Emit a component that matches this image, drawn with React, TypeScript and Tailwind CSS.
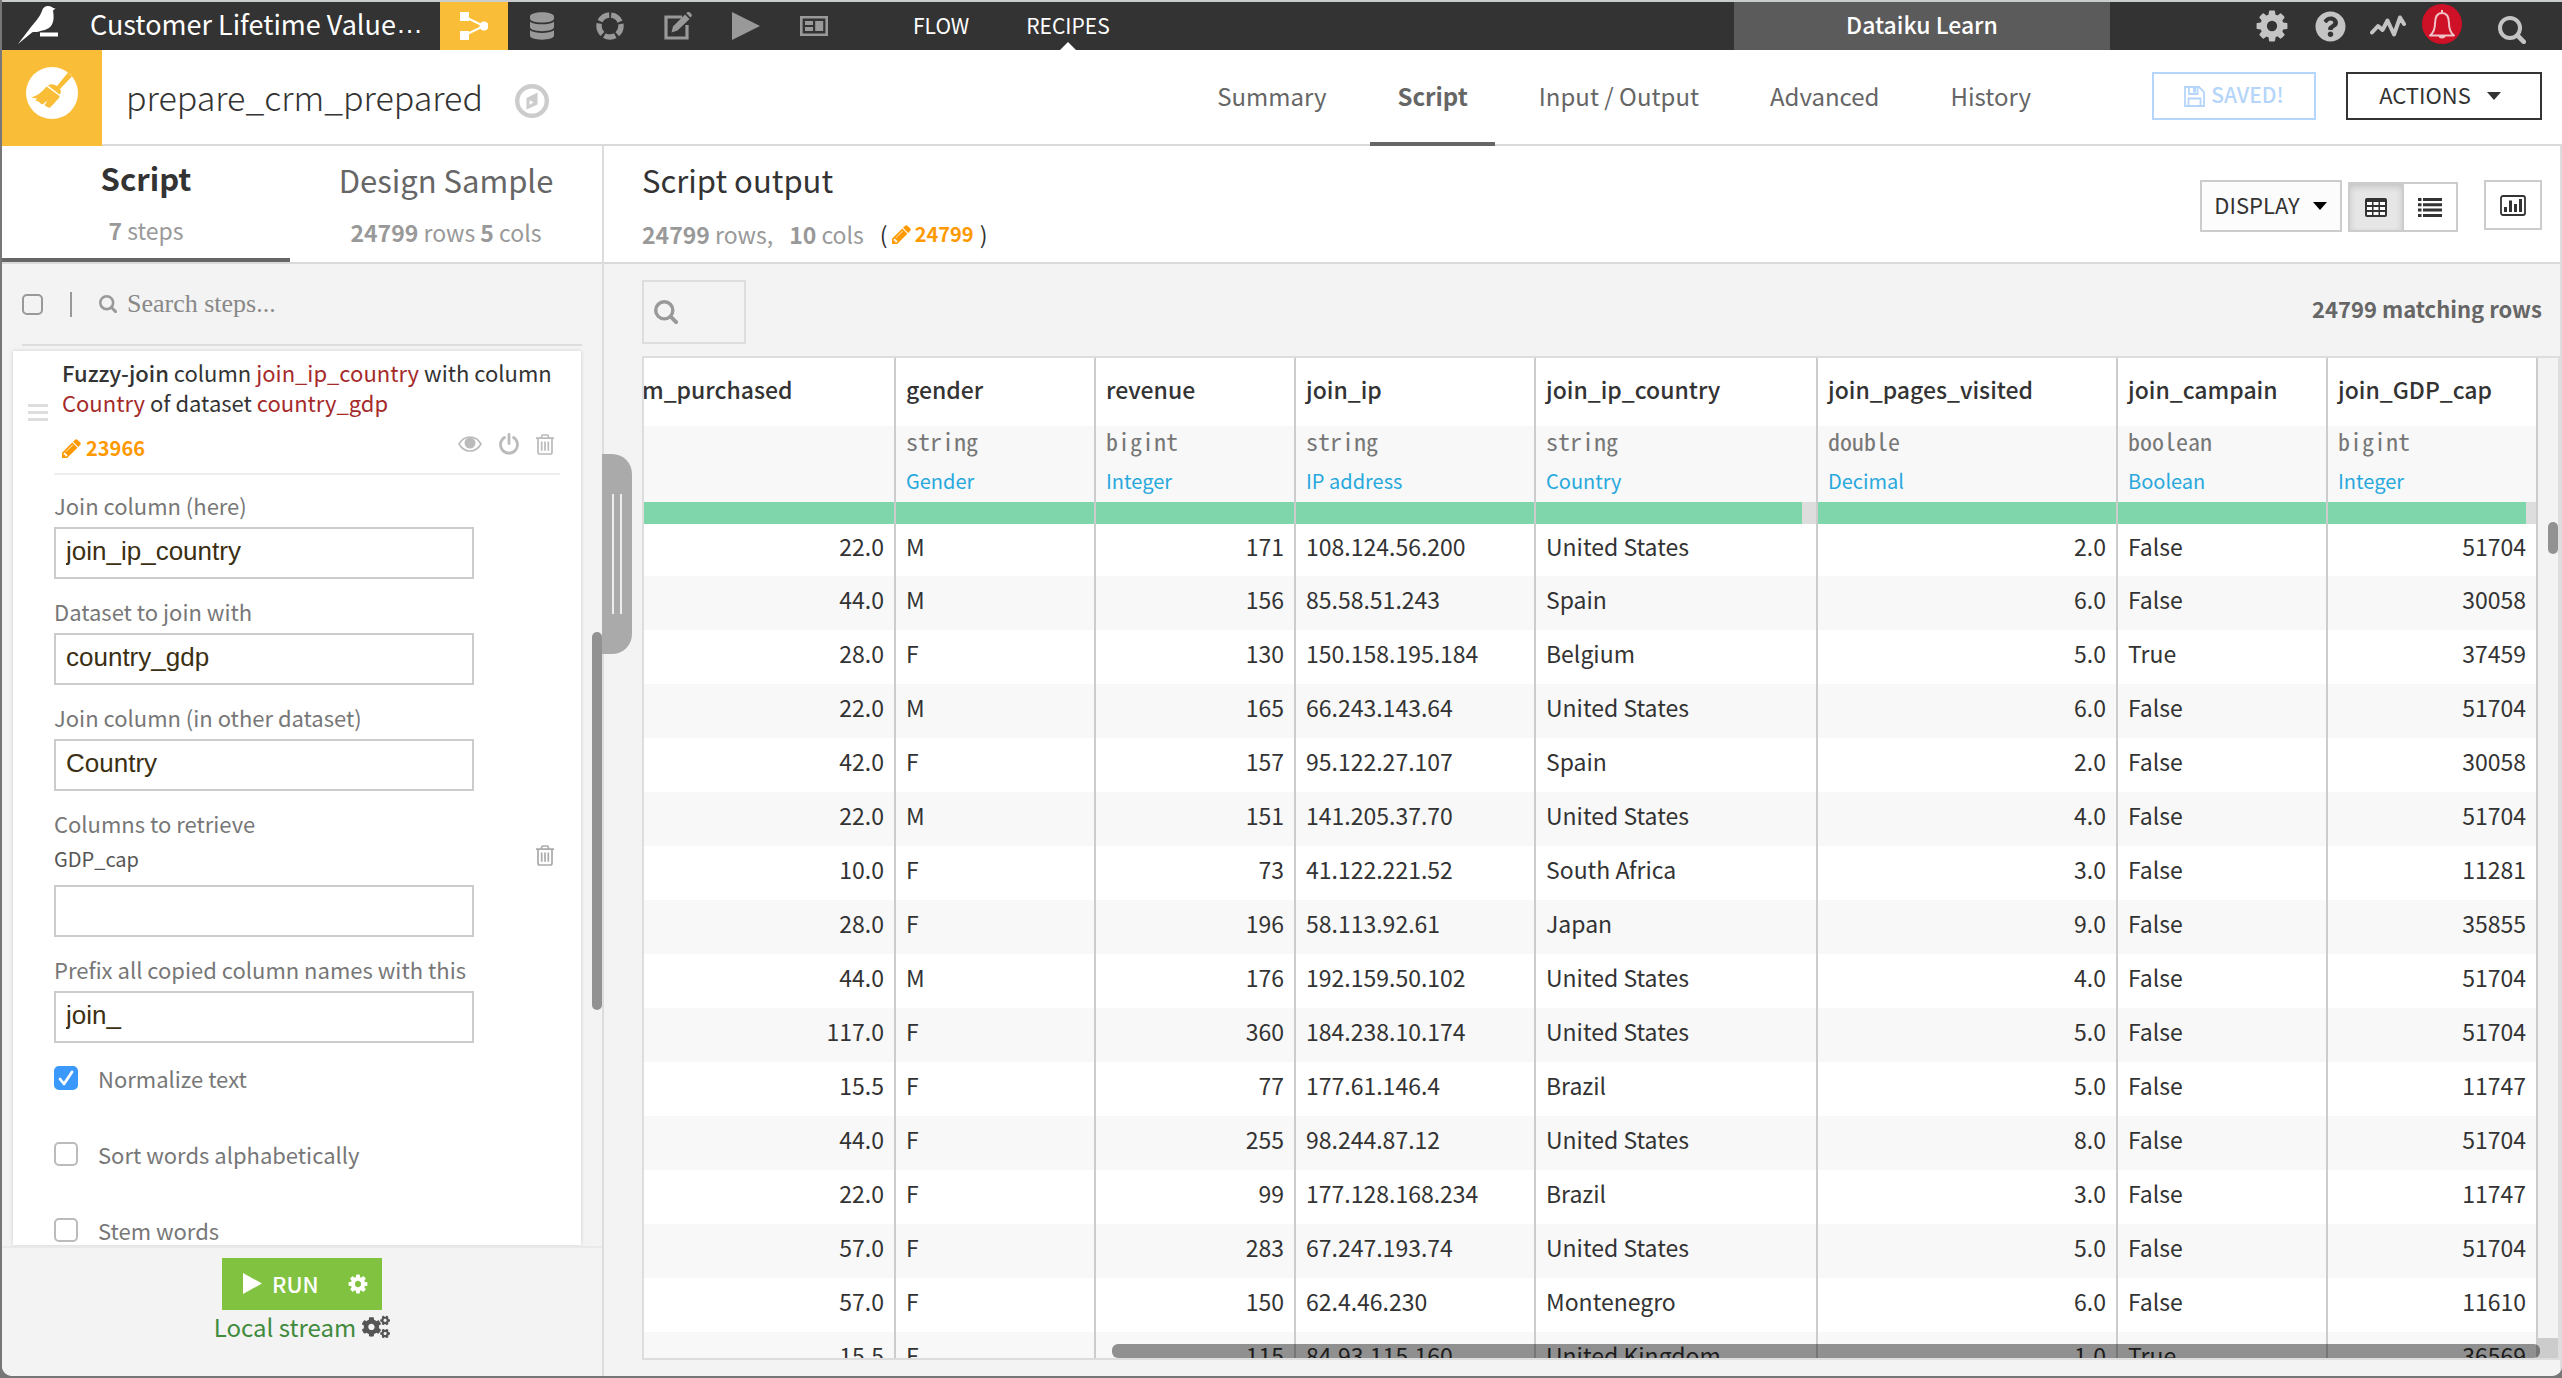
import { ReactNode, useState } from "react";
import { FaCogs, FaDatabase, FaQuestionCircle } from "react-icons/fa";

type IconProps = {
  className?: string;
};

function CogIcon({ className }: IconProps) {
  return (
    <svg viewBox="0 0 1792 1792" fill="currentColor" className={className} aria-hidden="true">
      <path d="M1152 896q0-106-75-181t-181-75-181 75-75 181 75 181 181 75 181-75 75-181zm512-109v222q0 12-8 23t-20 13l-185 28q-19 54-39 91 35 50 107 138 10 12 10 25t-9 23q-27 37-99 108t-94 71q-12 0-26-9l-138-108q-44 23-91 38-16 136-29 186-7 28-36 28h-222q-14 0-24.5-8.5t-11.5-21.5l-28-184q-49-16-90-37l-141 107q-10 9-25 9-14 0-25-11-126-114-165-168-7-10-7-23 0-12 8-23 15-21 51-66.5t54-70.5q-27-50-41-99l-183-27q-13-2-21-12.5t-8-23.5v-222q0-12 8-23t19-13l186-28q14-46 39-92-40-57-107-138-10-12-10-24 0-10 9-23 26-36 98.5-107.5t94.5-71.5q13 0 26 10l138 107q44-23 91-38 16-136 29-186 7-28 36-28h222q14 0 24.5 8.5t11.5 21.5l28 184q49 16 90 37l142-107q9-9 24-9 13 0 25 10 129 119 165 170 7 8 7 22 0 12-8 23-15 21-51 66.5t-54 70.5q26 50 41 98l183 28q13 2 21 12.5t8 23.5z" />
    </svg>
  );
}

function PencilIcon({ className }: IconProps) {
  return (
    <svg viewBox="128 128 1536 1536" fill="currentColor" className={className} aria-hidden="true">
      <path d="M491 1536l91-91-235-235-91 91v107h128v128h107zm523-928q0-22-22-22-10 0-17 7l-542 542q-7 7-7 17 0 22 22 22 10 0 17-7l542-542q7-7 7-17zm-54-192l416 416-832 832h-416v-416zm683 96q0 53-37 90l-166 166-416-416 166-165q36-38 90-38 53 0 91 38l235 234q37 39 37 91z" />
    </svg>
  );
}

function SearchIcon({ className }: IconProps) {
  return (
    <svg viewBox="0 0 28 28" fill="none" stroke="currentColor" className={className} aria-hidden="true">
      <circle cx="12" cy="12" r="10" strokeWidth="4" />
      <path d="M19.5 19.5l6.3 6.3" strokeWidth="4.6" strokeLinecap="round" />
    </svg>
  );
}

function TrashIcon({ className }: IconProps) {
  return (
    <svg viewBox="0 0 18 21" fill="none" stroke="currentColor" strokeWidth="1.7" className={className} aria-hidden="true">
      <path d="M0 4.2h18M5.6 4V2.4Q5.6 1 7 1h4q1.4 0 1.4 1.4V4M2 4.5v13.7Q2 20 3.8 20h10.4q1.8 0 1.8-1.8V4.5M5.7 7.6v9.2M9 7.6v9.2M12.3 7.6v9.2" />
    </svg>
  );
}

function BirdLogo() {
  return (
    <svg viewBox="0 0 44 42" fill="#fff" className="h-[42px] w-11" aria-hidden="true">
      <path d="M2 39L15 22C21 15 24 11 26 6C27 2 30 1 32 1C35 1 36 2 37 3L39.500 3.500L37 5.500C38 12 38 17 35 21C32 25 27 25 23 26.500C20 27.500 17 26.500 16 27.500z" />
      <path d="M24 27.500h18v4H24z" />
    </svg>
  );
}

function FlowIcon() {
  return (
    <svg viewBox="0 0 28 28" className="size-7" aria-hidden="true">
      <path d="M5 5l19 9-19 9" fill="none" stroke="#fff" strokeWidth="2" />
      <path d="M0 0h9v9H0zM0 19h9v9H0z" fill="#fff" />
      <circle cx="24" cy="14" r="4.500" fill="#fff" />
    </svg>
  );
}

function RingIcon() {
  return (
    <svg viewBox="0 0 28 28" className="size-7" aria-hidden="true">
      <circle
        cx="14"
        cy="14"
        r="11"
        fill="none"
        stroke="currentColor"
        strokeWidth="5.400"
        strokeDasharray="11.400 2.423"
        strokeDashoffset="-1.200"
        transform="rotate(-90 14 14)"
      />
    </svg>
  );
}

function NotebookIcon() {
  return (
    <svg viewBox="0 0 28 28" className="size-7" aria-hidden="true">
      <path d="M18 5H2v21h21V13" fill="none" stroke="currentColor" strokeWidth="3.200" />
      <path d="M7.500 20.500l1.500-6L21 2.500l4.500 4.500L13.500 18.500z" fill="currentColor" />
      <path d="M22.300 1.200l1-1q1.200-.8 2.500.2l1.600 1.600q1 1.300 0 2.600l-1 1z" fill="currentColor" />
    </svg>
  );
}

function DashboardIcon() {
  return (
    <svg viewBox="0 0 28 20" fill="currentColor" className="h-5 w-7" aria-hidden="true">
      <path fillRule="evenodd" d="M0 0h28v20H0zM2.600 2.600v14.800h22.800V2.600z" />
      <path d="M5 5h8v4H5zM5 11h8v4H5zM15.200 5h8v10h-8z" />
    </svg>
  );
}

function PlayIcon({ className }: IconProps) {
  return (
    <svg viewBox="0 0 28 28" fill="currentColor" preserveAspectRatio="none" className={className} aria-hidden="true">
      <path d="M0 0l28 14L0 28z" />
    </svg>
  );
}

function BroomIcon() {
  return (
    <svg viewBox="0 0 52 52" className="size-[52px]" aria-hidden="true">
      <circle cx="26" cy="26" r="26" fill="#fff" />
      <path d="M42 5.500L46 9.500L34 22Q36 26 33.500 27.500L22 18.500Q26 16 31 19z" fill="#f9bd38" />
      <path d="M20.500 19.500L33.500 29Q34 31 31 33Q28 37 23.500 41L18.500 38.500L21.500 33.500L16.500 37.500Q14 36.500 12.500 34.500L9 33.500L11.500 31.800Q8 31 5 30.500Q14 28 20.500 19.500z" fill="#f9bd38" />
    </svg>
  );
}

function CompassIcon() {
  return (
    <svg viewBox="0 0 34 34" className="size-[34px]" aria-hidden="true">
      <circle cx="17" cy="17" r="14.800" fill="none" stroke="#ccc" strokeWidth="4.400" />
      <path d="M22.500 8.500v12L11.500 25.500V14z" fill="#ccc" />
      <path d="M14.500 16.200l4 2-4 2.800z" fill="#fff" />
    </svg>
  );
}

function Caret({ className }: IconProps) {
  return (
    <svg viewBox="0 0 14 8" fill="currentColor" className={className} aria-hidden="true">
      <path d="M0 0h14L7 8z" />
    </svg>
  );
}

const apps: { label: string; icon: ReactNode; active?: boolean }[] = [
  { label: "Flow", icon: <FlowIcon />, active: true },
  { label: "Datasets", icon: <FaDatabase className="h-7 w-6" /> },
  { label: "Recipes", icon: <RingIcon /> },
  { label: "Notebooks", icon: <NotebookIcon /> },
  { label: "Jobs", icon: <PlayIcon className="size-7" /> },
  { label: "Dashboards", icon: <DashboardIcon /> },
];

function TopBar() {
  return (
    <header className="border-t-2 border-[#c9cdcd] bg-[#333]">
      <div className="flex h-12 items-stretch text-white">
        <a href="#home" aria-label="Home" className="flex w-[72px] items-center justify-center">
          <BirdLogo />
        </a>
        <a
          href="#project"
          className="flex w-[366px] items-center pb-1 pl-4 text-[27px] leading-[44px] whitespace-nowrap"
        >
          Customer Lifetime Value
          <span className="font-['Liberation_Sans',sans-serif]">…</span>
        </a>
        {apps.map((app) => (
          <button
            key={app.label}
            aria-label={app.label}
            className={
              app.active
                ? "flex w-[68px] items-center justify-center bg-[#f9bd38] text-white"
                : "flex w-[68px] items-center justify-center text-[#999]"
            }
          >
            {app.icon}
          </button>
        ))}
        <nav className="ml-[65px] flex items-stretch gap-[57px] text-[21px] leading-[46px]">
          <a href="#flow">FLOW</a>
          <a href="#recipes" className="relative">
            RECIPES
            <svg viewBox="0 0 16 8" className="absolute bottom-0 left-1/2 h-2 w-4 -translate-x-1/2" aria-hidden="true">
              <path d="M8 0l8 8H0z" fill="#fff" />
            </svg>
          </a>
        </nav>
        <a
          href="#instance"
          className="ml-auto w-[376px] bg-[#5b5b5b] text-center text-[23px] leading-[44px] font-medium"
        >
          Dataiku Learn
        </a>
        <div className="ml-[133px] flex pr-[5px] text-[#c4c4c4]">
          <button aria-label="Settings" className="flex w-[58px] items-center justify-center">
            <CogIcon className="size-9" />
          </button>
          <button aria-label="Help" className="flex w-[58px] items-center justify-center">
            <FaQuestionCircle className="size-[31px]" />
          </button>
          <button aria-label="Activity" className="flex w-[58px] items-center justify-center">
            <svg viewBox="0 0 36 24" className="h-6 w-9" fill="none" stroke="currentColor" aria-hidden="true">
              <path d="M2 18.500L8 12L12.500 16L17.500 6.500L24 20.500L30 3.500L34 10" strokeWidth="4" strokeLinejoin="round" strokeLinecap="round" />
            </svg>
          </button>
          <button aria-label="Notifications" className="flex w-[50px] items-start justify-center pt-[2px]">
            <svg viewBox="0 0 40 40" className="size-10" aria-hidden="true">
              <circle cx="20" cy="20" r="20" fill="#ce1126" />
              <path
                d="M20 6v3M8 31.500q5-4 5-12Q13 9 20 9t7 10.500q0 8 5 12z"
                fill="none"
                stroke="#f0c3c8"
                strokeWidth="2"
                strokeLinejoin="round"
              />
              <path d="M16.500 32q.5 2.500 3.500 2.500t3.500-2.500z" fill="#f0c3c8" />
            </svg>
          </button>
          <button aria-label="Search" className="flex w-[90px] items-center justify-center pt-2">
            <SearchIcon className="size-7" />
          </button>
        </div>
      </div>
    </header>
  );
}

const recipeTabs = ["Summary", "Script", "Input / Output", "Advanced", "History"];

function RecipeHeader() {
  return (
    <div className="flex h-24 items-stretch border-b-2 border-[#dadada] bg-white pr-5">
      <div className="-mb-[2px] flex w-[100px] items-start justify-center bg-[#f9bd38] pt-[17px]">
        <BroomIcon />
      </div>
      <h1 className="ml-6 text-[34px] leading-[94px] font-light text-[#333]">prepare_crm_prepared</h1>
      <button aria-label="Navigate" className="ml-8 flex items-center pt-2">
        <CompassIcon />
      </button>
      <nav className="ml-auto flex gap-[17px]">
        {recipeTabs.map((tab) => (
          <a
            key={tab}
            href={`#${tab}`}
            className={
              tab === "Script"
                ? "-mb-[2px] border-b-4 border-[#666] px-[27px] text-[24px] leading-[92px] font-bold text-[#666]"
                : "px-[27px] text-[24px] leading-[92px] text-[#666]"
            }
          >
            {tab}
          </a>
        ))}
      </nav>
      <button className="mt-[22px] ml-[94px] flex h-12 w-[164px] items-center justify-center gap-[6px] border-2 border-[#b5d5fa] text-[21px] leading-[40px] font-medium text-[#b5d5fa]">
        <svg viewBox="0 0 21 21" className="size-[21px]" fill="none" stroke="currentColor" strokeWidth="1.800" aria-hidden="true">
          <path d="M1 1h14l5 5v14H1zM5 1v7h8.500V1M4.500 20v-7.500h12V20" />
          <path d="M10.500 2v4.500" strokeWidth="3" />
        </svg>
        <span className="pb-1">SAVED!</span>
      </button>
      <button className="mt-[22px] ml-[30px] flex h-12 w-[196px] items-center justify-center gap-4 border-2 border-[#333] pr-2 text-[22px] leading-[40px] text-[#333]">
        <span className="pb-1">ACTIONS</span>
        <Caret className="h-2 w-[14px]" />
      </button>
    </div>
  );
}

function TextBox({ id, value, className }: { id: string; value: string; className: string }) {
  const [text, setText] = useState(value);
  return (
    <input
      id={id}
      type="text"
      value={text}
      onChange={(e) => setText(e.target.value)}
      className={`${className} block h-[52px] w-[420px] border-2 border-[#ccc] bg-white px-[10px] pb-1 font-['Liberation_Sans',sans-serif] text-[26px] text-[#3b2f13]`}
    />
  );
}

function Field({ id, label, value }: { id: string; label: string; value: string }) {
  return (
    <div className="mb-[17px]">
      <label htmlFor={id} className="block text-[#777]">
        {label}
      </label>
      <TextBox id={id} value={value} className="mt-[7px]" />
    </div>
  );
}

function CheckRow({ label, checked = false }: { label: string; checked?: boolean }) {
  const [on, setOn] = useState(checked);
  return (
    <label className="mb-[46px] flex items-center gap-5 text-[#777]">
      <span className="relative flex size-6">
        <input
          type="checkbox"
          checked={on}
          onChange={() => setOn(!on)}
          className="size-6 appearance-none rounded-[5px] border-2 border-[#bbb] bg-white checked:border-[#3b99fc] checked:bg-[#3b99fc]"
        />
        {on ? (
          <svg viewBox="0 0 24 24" className="pointer-events-none absolute inset-0" fill="none" aria-hidden="true">
            <path d="M6 13l4 5 8-12" stroke="#fff" strokeWidth="2.800" strokeLinecap="round" strokeLinejoin="round" />
          </svg>
        ) : null}
      </span>
      {label}
    </label>
  );
}

function StepCard() {
  return (
    <section className="mr-[21px] ml-[11px] bg-white pt-[6px] pl-[41px] text-[22px] leading-[30px] shadow-[0_0_4px_rgba(0,0,0,0.15)]">
      <div className="relative mr-[21px] border-b-2 border-[#eee] pb-[10px] pl-2">
        <span className="absolute top-[47px] -left-[26px] flex flex-col gap-1">
          <span className="h-[3px] w-5 bg-[#ddd]" />
          <span className="h-[3px] w-5 bg-[#ddd]" />
          <span className="h-[3px] w-5 bg-[#ddd]" />
        </span>
        <p className="text-[#333]">
          <span className="font-medium">Fuzzy-join</span> column{" "}
          <span className="text-[#a52a2a]">join_ip_country</span> with column{" "}
          <span className="text-[#a52a2a]">Country</span> of dataset{" "}
          <span className="text-[#a52a2a]">country_gdp</span>
        </p>
        <div className="mt-4 flex h-[30px] items-center">
          <PencilIcon className="size-[19px] text-[#ff9900]" />
          <span className="ml-[5px] text-[20px] font-bold text-[#ff9900]">23966</span>
          <div className="ml-auto flex items-center gap-4 pr-[6px] pb-2 text-[#bbb]">
            <button aria-label="Preview">
              <svg viewBox="0 0 24 16" className="h-4 w-6" aria-hidden="true">
                <path d="M1 8Q5 1 12 1t11 7Q19 15 12 15T1 8z" fill="none" stroke="currentColor" strokeWidth="1.600" />
                <circle cx="12" cy="7" r="5.500" fill="currentColor" />
              </svg>
            </button>
            <button aria-label="Disable">
              <svg viewBox="0 0 22 22" className="size-[22px]" fill="none" stroke="currentColor" strokeWidth="2.800" strokeLinecap="round" aria-hidden="true">
                <path d="M11 1.500v9M6.500 4.500a8.500 8.500 0 1 0 9 0" />
              </svg>
            </button>
            <button aria-label="Delete">
              <TrashIcon className="h-[21px] w-[18px]" />
            </button>
          </div>
        </div>
      </div>
      <div className="pt-[15px]">
        <Field id="join-here" label="Join column (here)" value="join_ip_country" />
        <Field id="join-dataset" label="Dataset to join with" value="country_gdp" />
        <Field id="join-other" label="Join column (in other dataset)" value="Country" />
        <label htmlFor="retrieve" className="block text-[#777]">
          Columns to retrieve
        </label>
        <div className="mt-[6px] flex items-center text-[20px] text-[#555]">
          GDP_cap
          <button aria-label="Remove GDP_cap" className="mr-[27px] mb-2 ml-auto text-[#aaa]">
            <TrashIcon className="h-[21px] w-[18px]" />
          </button>
        </div>
        <TextBox id="retrieve" value="" className="mt-[11px] mb-[17px]" />
        <Field id="prefix" label="Prefix all copied column names with this" value="join_" />
        <div className="pt-[3px]">
          <CheckRow label="Normalize text" checked />
          <CheckRow label="Sort words alphabetically" />
          <CheckRow label="Stem words" />
        </div>
      </div>
    </section>
  );
}

function ScriptPanel() {
  return (
    <aside className="relative flex w-[602px] shrink-0 flex-col border-r-2 border-[#ddd] bg-[#f3f3f3]">
      <div className="flex h-[118px] shrink-0 border-b-2 border-[#dadada] bg-white text-center">
        <button className="flex w-[288px] flex-col items-center border-b-4 border-[#666] pt-3 text-[#333]">
          <span className="text-[31px] leading-[40px] font-bold">Script</span>
          <span className="mt-4 text-[23px] leading-[32px] text-[#999]">
            <b>7</b> steps
          </span>
        </button>
        <button className="flex flex-1 flex-col items-center pt-[14px] text-[#666]">
          <span className="text-[31px] leading-[40px]">Design Sample</span>
          <span className="mt-4 text-[23px] leading-[32px] text-[#999]">
            <b>24799</b> rows <b>5</b> cols
          </span>
        </button>
      </div>
      <div className="mr-5 ml-5 flex h-[82px] shrink-0 items-center border-b-2 border-[#ddd]">
        <input
          type="checkbox"
          aria-label="Select all steps"
          className="size-[21px] appearance-none rounded-[5px] border-2 border-[#999]"
        />
        <span className="mx-[27px] h-[25px] w-[2px] bg-[#999]" />
        <SearchIcon className="size-[18px] text-[#999]" />
        <input
          type="search"
          aria-label="Search steps"
          placeholder="Search steps..."
          className="ml-[10px] w-[400px] pb-[2px] font-['Liberation_Serif',serif] text-[26px] placeholder:text-[#888] placeholder:opacity-100"
        />
      </div>
      <div className="min-h-0 flex-1 overflow-hidden pt-[5px]">
        <StepCard />
      </div>
      <div className="flex h-[130px] shrink-0 flex-col items-center border-t-2 border-[#e9e9e9] pt-[10px]">
        <div className="flex h-[52px] w-40 items-stretch justify-between bg-[#81c341] text-white">
          <button className="flex items-center gap-[10px] pb-[2px] pl-[21px] text-[22px] leading-[30px] font-medium">
            <PlayIcon className="h-[21px] w-[19px]" />
            RUN
          </button>
          <button aria-label="Run options" className="mr-[13px]">
            <CogIcon className="size-[22px]" />
          </button>
        </div>
        <a href="#engine" className="flex items-center gap-[6px] text-[24px] leading-[34px] text-[#418a3d]">
          Local stream
          <FaCogs className="size-7 text-[#555]" />
        </a>
      </div>
      <span className="absolute top-[486px] right-0 h-[378px] w-[10px] rounded-[5px] bg-[#929292]" />
      <button
        aria-label="Resize panel"
        className="absolute top-[308px] -right-[30px] z-10 flex h-[200px] w-[30px] items-center justify-center gap-[6px] rounded-r-[20px] bg-[#aaa]"
      >
        <span className="h-[120px] w-[2px] bg-[#eee]" />
        <span className="h-[120px] w-[2px] bg-[#eee]" />
      </button>
    </aside>
  );
}

type Column = {
  name: string;
  storage: string;
  meaning: string;
  width: string;
  valid: number;
  numeric?: boolean;
};

const columns: Column[] = [
  { name: "m_purchased", storage: "", meaning: "", width: "w-[252px]", valid: 100, numeric: true },
  { name: "gender", storage: "string", meaning: "Gender", width: "w-[200px]", valid: 100 },
  { name: "revenue", storage: "bigint", meaning: "Integer", width: "w-[200px]", valid: 100, numeric: true },
  { name: "join_ip", storage: "string", meaning: "IP address", width: "w-[240px]", valid: 100 },
  { name: "join_ip_country", storage: "string", meaning: "Country", width: "w-[282px]", valid: 95 },
  { name: "join_pages_visited", storage: "double", meaning: "Decimal", width: "w-[300px]", valid: 100, numeric: true },
  { name: "join_campain", storage: "boolean", meaning: "Boolean", width: "w-[210px]", valid: 100 },
  { name: "join_GDP_cap", storage: "bigint", meaning: "Integer", width: "w-auto", valid: 95, numeric: true },
];

const rows = [
  ["22.0", "M", "171", "108.124.56.200", "United States", "2.0", "False", "51704"],
  ["44.0", "M", "156", "85.58.51.243", "Spain", "6.0", "False", "30058"],
  ["28.0", "F", "130", "150.158.195.184", "Belgium", "5.0", "True", "37459"],
  ["22.0", "M", "165", "66.243.143.64", "United States", "6.0", "False", "51704"],
  ["42.0", "F", "157", "95.122.27.107", "Spain", "2.0", "False", "30058"],
  ["22.0", "M", "151", "141.205.37.70", "United States", "4.0", "False", "51704"],
  ["10.0", "F", "73", "41.122.221.52", "South Africa", "3.0", "False", "11281"],
  ["28.0", "F", "196", "58.113.92.61", "Japan", "9.0", "False", "35855"],
  ["44.0", "M", "176", "192.159.50.102", "United States", "4.0", "False", "51704"],
  ["117.0", "F", "360", "184.238.10.174", "United States", "5.0", "False", "51704"],
  ["15.5", "F", "77", "177.61.146.4", "Brazil", "5.0", "False", "11747"],
  ["44.0", "F", "255", "98.244.87.12", "United States", "8.0", "False", "51704"],
  ["22.0", "F", "99", "177.128.168.234", "Brazil", "3.0", "False", "11747"],
  ["57.0", "F", "283", "67.247.193.74", "United States", "5.0", "False", "51704"],
  ["57.0", "F", "150", "62.4.46.230", "Montenegro", "6.0", "False", "11610"],
  ["15.5", "F", "115", "84.93.115.160", "United Kingdom", "1.0", "True", "36569"],
];

function DataTable() {
  return (
    <table className="w-full table-fixed border-separate border-spacing-0 bg-white text-[23px] text-[#333]">
      <colgroup>
        {columns.map((col) => (
          <col key={col.name} className={col.width} />
        ))}
      </colgroup>
      <thead>
        <tr>
          {columns.map((col, i) => (
            <th key={col.name} scope="col" className="border-r-2 border-[#ccc] p-0 text-left align-top font-normal">
              <div
                className={
                  i === 0
                    ? "-ml-[2px] h-[68px] pt-[14px] leading-[34px] font-medium"
                    : "h-[68px] pt-[14px] pl-[10px] leading-[34px] font-medium"
                }
              >
                {col.name}
              </div>
              <div className="h-[76px] bg-[#f8f8f8] pl-[10px] leading-[30px]">
                <div className="h-[30px] font-['Noto_Sans_Mono_CJK_SC','Liberation_Mono',monospace] text-[24px] text-[#777]">
                  {col.storage}
                </div>
                <div className="mt-[10px] text-[20px] text-[#28a9dd]">{col.meaning}</div>
              </div>
              <div className="h-[22px] bg-[#ddd]">
                <div className="h-full bg-[#7fd6aa]" style={{ width: `${col.valid}%` }} />
              </div>
            </th>
          ))}
        </tr>
      </thead>
      <tbody>
        {rows.map((row, r) => (
          <tr key={r} className="h-[54px] first:h-[52px] even:bg-[#f8f8f8]">
            {row.map((cell, c) => (
              <td
                key={columns[c].name}
                className={
                  columns[c].numeric
                    ? "border-r-2 border-[#ccc] px-[10px] pt-0 pb-2 text-right leading-[34px]"
                    : "border-r-2 border-[#ccc] px-[10px] pt-0 pb-2 leading-[34px]"
                }
              >
                {cell}
              </td>
            ))}
          </tr>
        ))}
      </tbody>
    </table>
  );
}

function OutputPanel() {
  return (
    <main className="flex min-w-0 flex-1 flex-col bg-[#f3f3f3]">
      <div className="flex h-[118px] shrink-0 items-start border-b-2 border-[#dadada] bg-white pr-[18px] pl-[38px]">
        <div className="pt-[14px]">
          <h2 className="text-[31px] leading-[40px] text-[#333]">Script output</h2>
          <p className="mt-[18px] flex items-center text-[23px] leading-[32px] text-[#999]">
            <b>24799</b>&nbsp;rows,
            <b className="ml-4">10</b>&nbsp;cols
            <span className="ml-4 text-[#333]">(</span>
            <PencilIcon className="ml-1 size-[19px] text-[#ff9900]" />
            <b className="mr-[6px] ml-1 text-[20px] text-[#ff9900]">24799</b>
            <span className="text-[#333]">)</span>
          </p>
        </div>
        <div className="ml-auto flex items-start pt-[34px] text-[#333]">
          <button className="flex h-[52px] w-[142px] items-center justify-center gap-3 border-2 border-[#ccc] bg-[#fcfcfc] text-[22px] leading-[40px]">
            <span className="pb-1">DISPLAY</span>
            <Caret className="h-2 w-4 text-black" />
          </button>
          <div className="mt-[2px] ml-[6px] flex">
            <button
              aria-label="Table view"
              className="flex h-[50px] w-[56px] items-center justify-center border-2 border-[#ccc] bg-[#e6e6e6] shadow-[inset_0_3px_6px_rgba(0,0,0,0.15)]"
            >
              <svg viewBox="0 0 22 19" className="h-[19px] w-[22px]" aria-hidden="true">
                <rect width="22" height="19" rx="2" fill="#333" />
                <path
                  d="M2 4h5v3H2zM8.500 4h5v3h-5zM15 4h5v3h-5zM2 9h5v3H2zM8.500 9h5v3h-5zM15 9h5v3h-5zM2 14h5v3H2zM8.500 14h5v3h-5zM15 14h5v3h-5z"
                  fill="#fff"
                />
              </svg>
            </button>
            <button
              aria-label="List view"
              className="-ml-[2px] flex h-[50px] w-[56px] items-center justify-center border-2 border-[#ccc] bg-white"
            >
              <svg viewBox="0 0 24 19" fill="#333" className="h-[19px] w-6" aria-hidden="true">
                <path d="M0 0h3.500v3H0zM5 0h19v3H5zM0 5.300h3.500v3H0zM5 5.300h19v3H5zM0 10.600h3.500v3H0zM5 10.600h19v3H5zM0 16h3.500v3H0zM5 16h19v3H5z" />
              </svg>
            </button>
          </div>
          <button
            aria-label="Charts view"
            className="ml-[26px] flex h-[50px] w-[58px] items-center justify-center border-2 border-[#ccc] bg-white"
          >
            <svg viewBox="0 0 26 21" className="h-[21px] w-[26px]" aria-hidden="true">
              <rect x="1" y="1" width="24" height="19" rx="2" fill="none" stroke="#333" strokeWidth="1.800" />
              <path d="M4 12h3v5H4zM9 5.500h3V17H9zM14 9h3v8h-3zM19 4h3v13h-3z" fill="#333" />
            </svg>
          </button>
        </div>
      </div>
      <div className="flex shrink-0 items-start pt-4 pr-[18px] pl-[38px]">
        <label className="flex h-16 w-[104px] items-center border-2 border-[#ddd] pl-[10px] text-[#999]">
          <SearchIcon className="size-6 shrink-0" />
          <input type="search" aria-label="Search output" className="min-w-0 flex-1" />
        </label>
        <p className="ml-auto pt-[13px] text-[22px] leading-[30px] font-bold text-[#666]">24799 matching rows</p>
      </div>
      <div className="relative mt-3 mb-4 ml-[38px] flex min-h-0 flex-1 border-2 border-r-0 border-[#ddd]">
        <div className="min-w-0 flex-1 overflow-hidden">
          <DataTable />
        </div>
        <div className="relative w-5 shrink-0 bg-[#f3f3f3]">
          <span className="absolute top-[164px] right-0 h-8 w-[10px] rounded-[5px] bg-[#929292]" />
          <span className="absolute right-0 bottom-0 h-5 w-full bg-[#ccc]" />
        </div>
        <span className="absolute right-5 bottom-0 left-[468px] h-[14px] rounded-[6px] bg-black/42" />
        <span className="w-[2px] bg-[#ddd]" />
      </div>
    </main>
  );
}

export default function App() {
  return (
    <div className="h-screen bg-[#777] pb-[2px] pl-[2px] font-['Noto_Sans_CJK_SC','Noto_Sans',sans-serif]">
      <div className="flex h-full flex-col overflow-hidden rounded-b-[10px] bg-[#f3f3f3]">
        <TopBar />
        <RecipeHeader />
        <div className="flex min-h-0 flex-1 border-r-2 border-[#ddd]">
          <ScriptPanel />
          <OutputPanel />
        </div>
      </div>
    </div>
  );
}
